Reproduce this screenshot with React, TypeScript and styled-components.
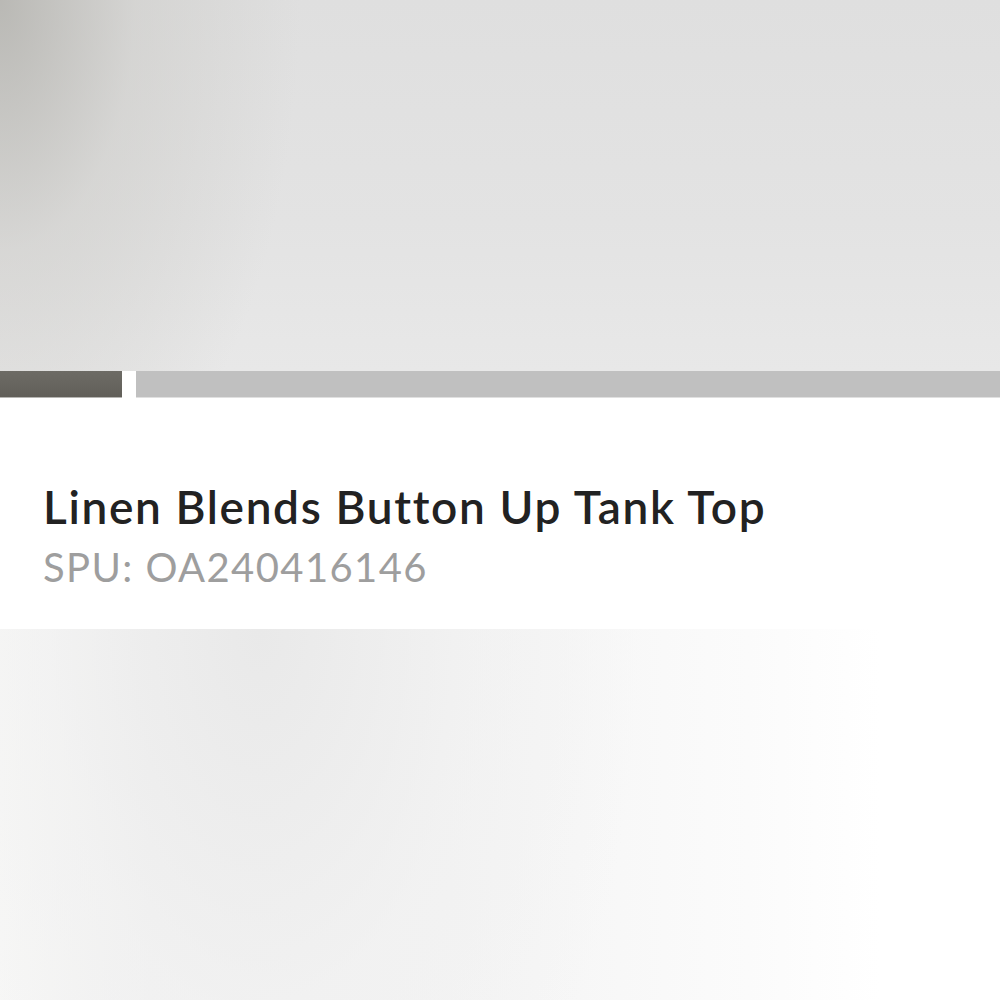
import styled, { createGlobalStyle } from 'styled-components';

const GlobalStyle = createGlobalStyle`
  html, body {
    margin: 0;
    padding: 0;
    background: #ffffff;
  }
  body {
    font-family: Lato, "Noto Sans", sans-serif;
  }
`

const Page = styled.div`
  width: 1000px;
  height: 1000px;
  display: flex;
  flex-direction: column;
  overflow: hidden;
`

const Hero = styled.div`
  height: 371px;
  flex: 0 0 371px;
  background:
    radial-gradient(ellipse 300px 560px at 0px 0px, rgba(176, 175, 170, 0.8), rgba(200, 199, 195, 0.45) 45%, rgba(222, 222, 220, 0) 100%),
    linear-gradient(180deg, #dfdfdf 0%, #e3e3e3 60%, #e8e8e8 100%);
`

const Strip = styled.div`
  display: flex;
  flex-direction: row;
  height: 27px;
  flex: 0 0 27px;
  gap: 14px;
  background: #fff;
`

const Swatch = styled.div<{ $w?: number; $bg: string }>`
  flex: ${p => (p.$w ? `0 0 ${p.$w}px` : '1 1 auto')};
  background: ${p => p.$bg};
  border-bottom: 1px solid rgba(255, 255, 255, 0.5);
`

const Info = styled.div`
  flex: 0 0 231px;
  background: #fff;
  padding: 82px 0 0 43px;
  box-sizing: border-box;
`

const Title = styled.div`
  color: #222222;
  font-size: 46px;
  font-weight: 600;
  line-height: 54px;
  letter-spacing: 1.65px;
`

const Spu = styled.div`
  color: #9e9e9e;
  font-size: 40px;
  font-weight: 400;
  line-height: 50px;
  letter-spacing: 1.4px;
  margin-top: 8px;
`

const Bottom = styled.div`
  flex: 1 1 auto;
  background:
    radial-gradient(ellipse 380px 700px at 260px 0px, rgba(233, 233, 233, 1), rgba(240, 240, 240, 0.6) 55%, rgba(250, 250, 250, 0) 100%),
    linear-gradient(90deg, #f8f8f7 0%, #f2f2f2 15%, #f4f4f4 45%, #fbfbfb 75%, #ffffff 88%);
`

function App() {
  return (
    <Page>
      <GlobalStyle />
      <Hero />
      <Strip>
        <Swatch $w={122} $bg="linear-gradient(180deg, #6d6b65, #615f59)" />
        <Swatch $bg="#c0c0c0" />
      </Strip>
      <Info>
        <Title>Linen Blends Button Up Tank Top</Title>
        <Spu>SPU: OA240416146</Spu>
      </Info>
      <Bottom />
    </Page>
  );
}

export default App;
